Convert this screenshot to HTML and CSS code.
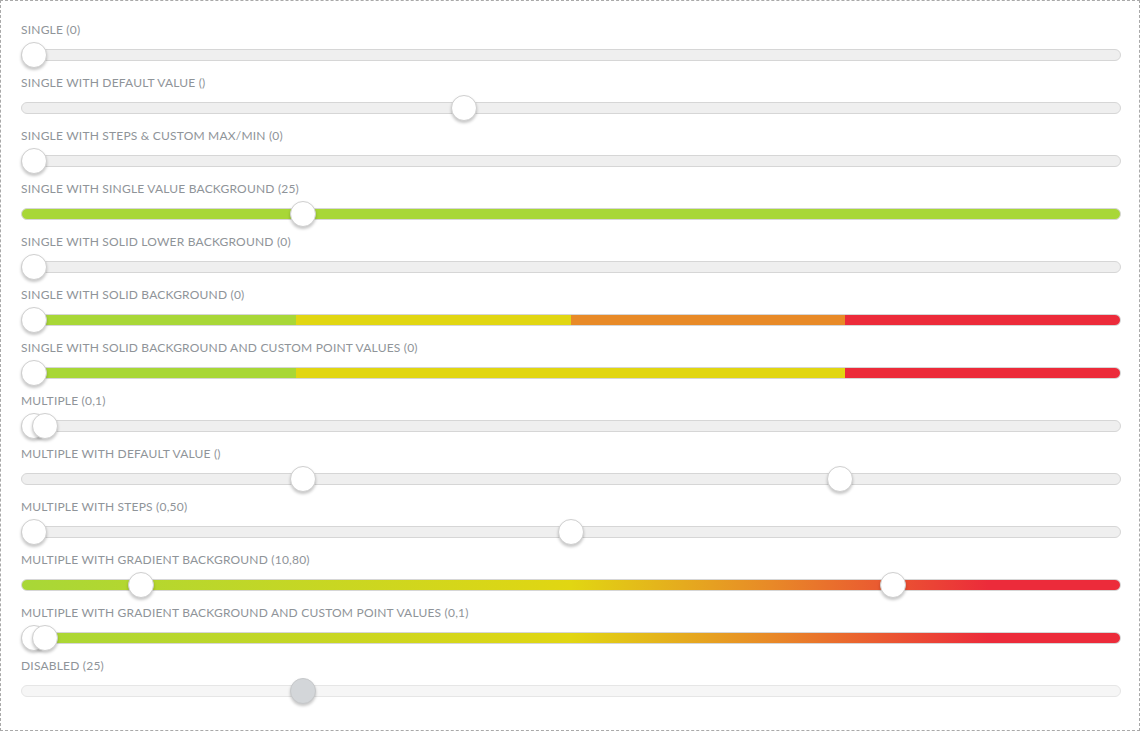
FILE: index.html
```html
<!DOCTYPE html>
<html>
<head>
<meta charset="utf-8">
<link rel="stylesheet" href="styles.css">
</head>
<body>
<div class="panel">
  <div class="row">
    <div class="label">SINGLE (0)</div>
    <div class="slider"><div class="track"></div><div class="thumb" style="--v:0"></div></div>
  </div>
  <div class="row">
    <div class="label">SINGLE WITH DEFAULT VALUE ()</div>
    <div class="slider"><div class="track"></div><div class="thumb" style="--v:40"></div></div>
  </div>
  <div class="row">
    <div class="label">SINGLE WITH STEPS &amp; CUSTOM MAX/MIN (0)</div>
    <div class="slider"><div class="track"></div><div class="thumb" style="--v:0"></div></div>
  </div>
  <div class="row">
    <div class="label">SINGLE WITH SINGLE VALUE BACKGROUND (25)</div>
    <div class="slider"><div class="track green"></div><div class="thumb" style="--v:25"></div></div>
  </div>
  <div class="row">
    <div class="label">SINGLE WITH SOLID LOWER BACKGROUND (0)</div>
    <div class="slider"><div class="track"></div><div class="thumb" style="--v:0"></div></div>
  </div>
  <div class="row">
    <div class="label">SINGLE WITH SOLID BACKGROUND (0)</div>
    <div class="slider"><div class="track solid4"></div><div class="thumb" style="--v:0"></div></div>
  </div>
  <div class="row">
    <div class="label">SINGLE WITH SOLID BACKGROUND AND CUSTOM POINT VALUES (0)</div>
    <div class="slider"><div class="track solid3"></div><div class="thumb" style="--v:0"></div></div>
  </div>
  <div class="row">
    <div class="label">MULTIPLE (0,1)</div>
    <div class="slider"><div class="track"></div><div class="thumb" style="--v:0"></div><div class="thumb" style="--v:1"></div></div>
  </div>
  <div class="row">
    <div class="label">MULTIPLE WITH DEFAULT VALUE ()</div>
    <div class="slider"><div class="track"></div><div class="thumb" style="--v:25"></div><div class="thumb" style="--v:75"></div></div>
  </div>
  <div class="row">
    <div class="label">MULTIPLE WITH STEPS (0,50)</div>
    <div class="slider"><div class="track"></div><div class="thumb" style="--v:0"></div><div class="thumb" style="--v:50"></div></div>
  </div>
  <div class="row">
    <div class="label">MULTIPLE WITH GRADIENT BACKGROUND (10,80)</div>
    <div class="slider"><div class="track gradient"></div><div class="thumb" style="--v:10"></div><div class="thumb" style="--v:80"></div></div>
  </div>
  <div class="row">
    <div class="label">MULTIPLE WITH GRADIENT BACKGROUND AND CUSTOM POINT VALUES (0,1)</div>
    <div class="slider"><div class="track gradient"></div><div class="thumb" style="--v:0"></div><div class="thumb" style="--v:1"></div></div>
  </div>
  <div class="row">
    <div class="label">DISABLED (25)</div>
    <div class="slider disabled"><div class="track"></div><div class="thumb" style="--v:25"></div></div>
  </div>
</div>
</body>
</html>
```

FILE: styles.css
```css
html, body {
  margin: 0;
  padding: 0;
  background: #fff;
}
.panel {
  box-sizing: border-box;
  width: 1140px;
  height: 731px;
  border: 1px dashed #a9a9a9;
  padding: 21px 18px 0 20px;
  display: flex;
  flex-direction: column;
}
.row {
  display: flex;
  flex-direction: column;
  gap: 4px;
  height: 53px;
  flex: none;
}
.label {
  font-family: "Lato", "Liberation Sans", sans-serif;
  font-size: 12px;
  line-height: 16px;
  height: 16px;
  color: #8f9499;
  letter-spacing: 0.2px;
  white-space: nowrap;
}
.slider {
  position: relative;
  height: 26px;
  display: flex;
  align-items: center;
}
.track {
  box-sizing: border-box;
  width: 100%;
  height: 12px;
  border: 1px solid #d6d6d6;
  border-radius: 6px;
  background: #efefef;
}
.track.green {
  background: #a8d737;
}
.track.solid4 {
  background: linear-gradient(to right, #a8d737 0 25%, #e1d612 25% 50%, #e88a27 50% 75%, #ec2b3a 75% 100%);
}
.track.solid3 {
  background: linear-gradient(to right, #a8d737 0 25%, #e1d612 25% 75%, #ec2b3a 75% 100%);
}
.track.gradient {
  background: linear-gradient(to right, #a8d737 0%, #e1d612 50%, #e88a27 68%, #ec2b3a 88%, #ec2b3a 100%);
}
.thumb {
  position: absolute;
  top: 0;
  left: calc((100% - 26px) * var(--v) / 100);
  box-sizing: border-box;
  width: 26px;
  height: 26px;
  border-radius: 50%;
  background: #fff;
  border: 1px solid #cfcfcf;
  box-shadow: 0 2px 3px rgba(0, 0, 0, 0.22);
}
.disabled .track {
  background: #f6f6f6;
  border-color: #e6e6e6;
}
.disabled .thumb {
  background: #d3d6d9;
  border-color: #c6c8ca;
}
```
